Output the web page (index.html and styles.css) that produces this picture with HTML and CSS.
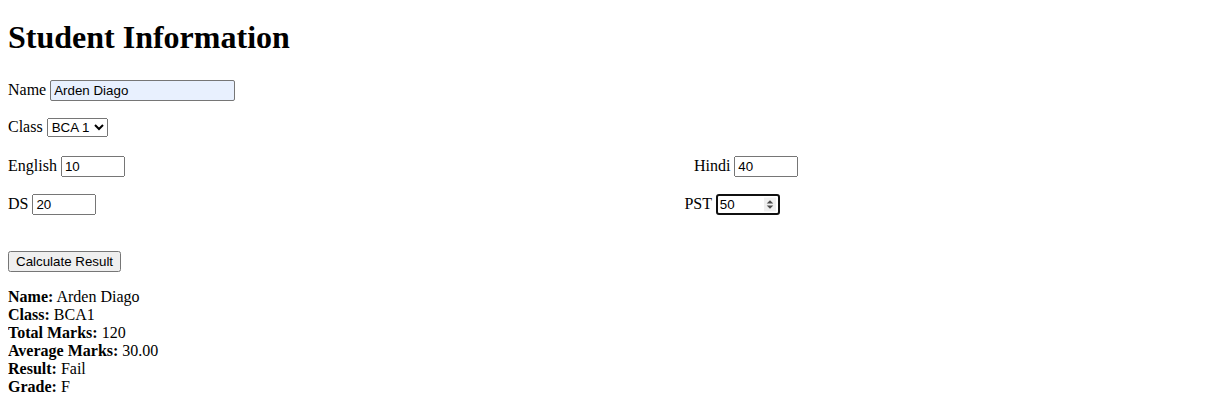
FILE: index.html
```html
<!DOCTYPE html>
<html>
<head>
<meta charset="utf-8">
<title>Student Information</title>
<link rel="stylesheet" href="styles.css">
</head>
<body>
<h1 class="title">Student Information</h1>
<form class="form">
  <p class="field">Name <input class="inp inp-name" type="text" value="Arden Diago"></p>
  <p class="field">Class <select class="sel"><option>BCA 1</option><option>BCA 2</option><option>BCA 3</option></select></p>
  <div class="pair pair-a">
    <span class="cell">English <input class="inp inp-mark" type="text" value="10"></span>
    <span class="cell">Hindi <input class="inp inp-mark" type="text" value="40"></span>
  </div>
  <div class="pair pair-b">
    <span class="cell">DS <input class="inp inp-mark" type="text" value="20"></span>
    <span class="cell">PST <span class="num-focus"><input class="num-inner" type="text" value="50"><svg class="spin" width="13" height="15" viewBox="0 0 13 15"><rect x="0" y="0" width="13" height="15" fill="#efefef"/><path d="M3 6.5 L6.5 3 L10 6.5 Z" fill="#4a4a4a"/><path d="M3 8.5 L6.5 12 L10 8.5 Z" fill="#4a4a4a"/></svg></span></span>
  </div>
  <br>
  <button class="btn" type="button">Calculate Result</button>
</form>
<div class="result">
  <b>Name:</b> Arden Diago<br>
  <b>Class:</b> BCA1<br>
  <b>Total Marks:</b> 120<br>
  <b>Average Marks:</b> 30.00<br>
  <b>Result:</b> Fail<br>
  <b>Grade:</b> F
</div>
</body>
</html>
```
FILE: styles.css
```css
body {
  margin: 8px;
  font-family: "Liberation Serif", serif;
  font-size: 16px;
  color: #000;
  background: #fff;
}
.title {
  font-size: 32px;
  margin: 11.44px 0 23.44px;
}
.field {
  margin: 16px 0;
  min-height: 22px;
}
.inp, .sel, .btn, .num-inner {
  font-family: "Liberation Sans", Arial, sans-serif;
  font-size: 13.333px;
}
.inp {
  box-sizing: border-box;
}
.inp-name {
  width: 185px;
  background: #e8f0fe;
  border: 1px solid #767676;
  border-radius: 2px;
  padding: 2px 3px;
}
.inp-mark {
  width: 64px;
}
.pair {
  display: flex;
  align-items: baseline;
  margin: 16px 0;
  min-height: 22px;
}
.pair-a {
  column-gap: 569px;
}
.pair-b {
  column-gap: 588px;
}
.num-focus {
  display: inline-flex;
  align-items: center;
  box-sizing: border-box;
  width: 64px;
  height: 21px;
  border: 2px solid #101010;
  border-radius: 3px;
  padding: 0 2px 0 1px;
}
.num-inner {
  border: 0;
  outline: 0;
  padding: 0 0 0 1px;
  width: 44px;
  background: transparent;
}
.spin {
  display: block;
}
.btn {
  margin-top: 1px;
}
.result {
  margin-top: 16px;
}
```
